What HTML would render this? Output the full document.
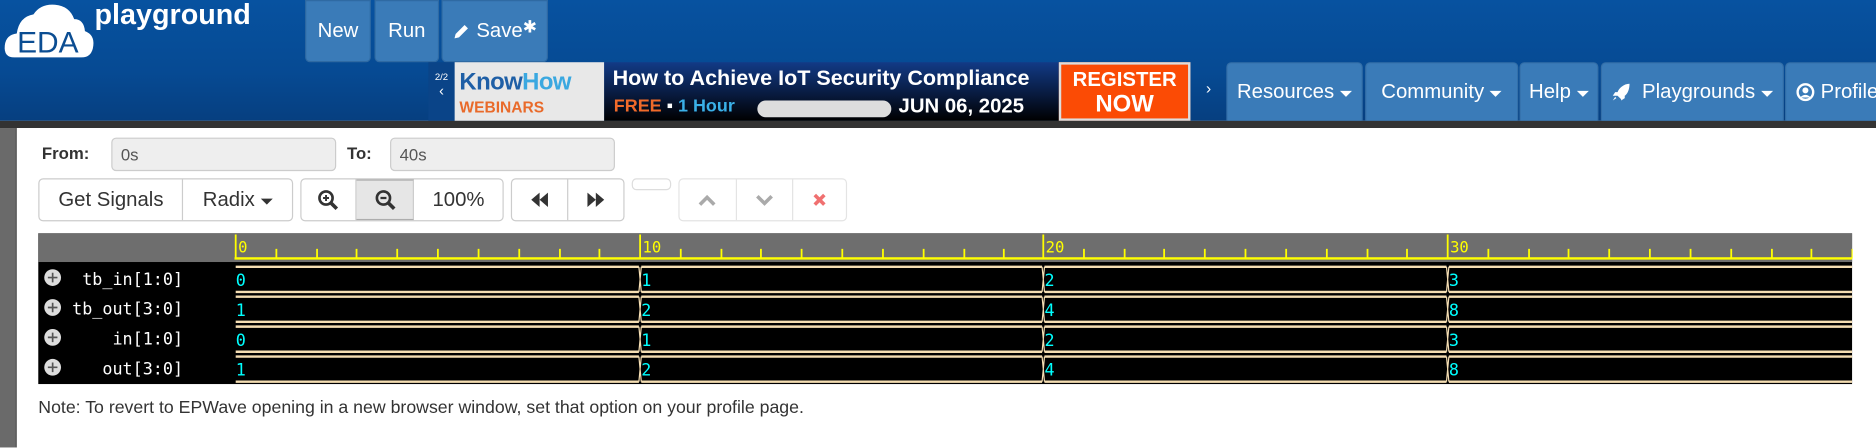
<!DOCTYPE html>
<html><head><meta charset="utf-8">
<style>
html,body{margin:0;padding:0;width:1876px;height:448px;overflow:hidden;background:#fff;font-family:"Liberation Sans",Arial,sans-serif}
#w{position:absolute;left:0;top:0;width:1568px;height:374px;transform:scale(1.19643);transform-origin:0 0}
.hdr{position:absolute;left:0;top:0;width:1568px;height:101px;background:linear-gradient(#0752a0,#064a93 60%,#063f80)}
.strip{position:absolute;left:0;top:101px;width:1568px;height:6px;background:#333}
.lside{position:absolute;left:0;top:107px;width:13px;height:267px;background:#6a6a6a}
.panel{position:absolute;left:13px;top:107px;width:1555px;height:267px;background:#fff;border-left:1px solid #444}
.tb{position:absolute;background:#3a7bb8;color:#fff;font-size:17px;display:flex;align-items:center;justify-content:center;border-radius:0 0 4px 4px;border:1px solid #2f6aa3;box-sizing:border-box}
.nav{position:absolute;top:52px;height:50px;background:#3a7bb8;color:#fff;font-size:17px;display:flex;align-items:center;justify-content:center;border-radius:4px 4px 0 0;box-sizing:border-box;border:1px solid #346fa8}
.car{border-left:5px solid transparent;border-right:5px solid transparent;border-top:5px solid #fff;margin-left:5px;margin-top:3px}
.lbl{position:absolute;font-size:14px;font-weight:bold;color:#333}
.inp{position:absolute;height:28px;background:#eee;border:1px solid #ccc;border-radius:4px;box-sizing:border-box;font-size:14px;color:#555;padding:5px 7px}
.grp{position:absolute;top:149px;height:36px;border:1px solid #ccc;border-radius:4px;box-sizing:border-box;display:flex;background:#fff}
.grp div{display:flex;align-items:center;justify-content:center;border-right:1px solid #ccc;font-size:17px;color:#333;box-sizing:border-box;height:100%}
.grp div:last-child{border-right:none}
</style></head><body><div id="w">
<div class="hdr"></div>
<svg style="position:absolute;left:0;top:0" width="82" height="52">
<path d="M12 48 Q3 48 4 38 Q5 29 14 28 Q16 14 28 12 Q34 3 46 4 Q58 5 62 16 Q70 16 71 26 Q79 29 78 38 Q77 48 68 48 Z" fill="#fff"/>
<text x="40" y="44" text-anchor="middle" font-family="Liberation Sans" font-size="25" fill="#0b4d92">EDA</text>
</svg>
<div style="position:absolute;left:79px;top:-1px;color:#fff;font-weight:bold;font-size:24px">playground</div>
<div class="tb" style="left:255px;top:0;width:55px;height:52px">New</div>
<div class="tb" style="left:313px;top:0;width:54px;height:52px">Run</div>
<div class="tb" style="left:369px;top:0;width:89px;height:52px"><svg width="15" height="15" viewBox="0 0 16 16"><path d="M2 14l1-4 8-8 3 3-8 8z" fill="#fff"/></svg>&nbsp;Save<sup style="font-size:14px;margin-top:-8px">&#10033;</sup></div>
<div style="position:absolute;left:358px;top:52px;width:22px;height:49px;background:#0a4488;color:#fff;font-size:8px;text-align:center;padding-top:8px;box-sizing:border-box">2/2<br><span style="font-size:12px">&#8249;</span></div>
<div style="position:absolute;left:380px;top:52px;width:125px;height:49px;background:#e8e8e8">
<div style="position:absolute;left:4px;top:6px;font-weight:bold;font-size:20px;color:#1f5fa6;letter-spacing:-0.5px">Know<span style="color:#3aa8e0">How</span></div>
<div style="position:absolute;left:4px;top:30px;font-weight:bold;font-size:13px;color:#e96a2a">WEBINARS</div></div>
<div style="position:absolute;left:505px;top:52px;width:380px;height:49px;background:linear-gradient(#123a86,#081a3e 55%,#000)">
<div style="position:absolute;left:7px;top:3px;color:#fff;font-weight:bold;font-size:18px;white-space:nowrap">How to Achieve IoT Security Compliance</div>
<div style="position:absolute;left:8px;top:28px;font-weight:bold;font-size:15px;color:#f06a2a;white-space:nowrap">FREE <span style="color:#fff">&#9642;</span> <span style="color:#3ab0e8">1 Hour</span></div>
<div style="position:absolute;left:128px;top:32px;width:112px;height:14px;background:#ddd;border-radius:7px"></div>
<div style="position:absolute;left:246px;top:27px;font-weight:bold;font-size:17px;color:#fff">JUN 06, 2025</div></div>
<div style="position:absolute;left:885px;top:52px;width:110px;height:49px;background:#fb4b05;border:2px solid #ddd;box-sizing:border-box;color:#fff;font-weight:bold;text-align:center;font-size:17px;line-height:20px;padding-top:3px">REGISTER<br><span style="font-size:20px">NOW</span></div>
<div style="position:absolute;left:1008px;top:66px;color:#fff;font-size:13px">&#8250;</div>
<div class="nav" style="left:1025px;width:114px">Resources<span class="car"></span></div>
<div class="nav" style="left:1141px;width:128px">Community<span class="car"></span></div>
<div class="nav" style="left:1270px;width:66px">Help<span class="car"></span></div>
<div class="nav" style="left:1338px;width:153px"><svg width="16" height="16" viewBox="0 0 16 16"><path d="M15 1C10 1 6 5 5 8L3 8 1 11 5 11 5 11 8 14 8 15 11 13 11 11C13 10 15 6 15 1Z M3 12L1 15 4 13Z" fill="#fff"/></svg>&nbsp;&nbsp;Playgrounds<span class="car"></span></div>
<div class="nav" style="left:1492px;width:90px;justify-content:flex-start;padding-left:8px"><svg width="16" height="16" viewBox="0 0 16 16"><circle cx="8" cy="8" r="6.5" fill="none" stroke="#fff" stroke-width="2"/><circle cx="8" cy="6.5" r="2.5" fill="#fff"/><path d="M3.5 12.5Q8 8 12.5 12.5" fill="#fff"/></svg>&nbsp;Profile</div>
<div class="strip"></div><div class="lside"></div><div class="panel"></div>
<div class="lbl" style="left:35px;top:120px">From:</div>
<div class="inp" style="left:93px;top:115px;width:188px">0s</div>
<div class="lbl" style="left:290px;top:120px">To:</div>
<div class="inp" style="left:326px;top:115px;width:188px">40s</div>
<div class="grp" style="left:32px;width:213px"><div style="width:121px">Get Signals</div><div style="width:91px">Radix<span class="car" style="border-top-color:#333"></span></div></div>
<div class="grp" style="left:251px;width:170px">
<div style="width:46px"><svg width="18" height="18" viewBox="0 0 18 18"><circle cx="7.5" cy="7.5" r="5.5" fill="none" stroke="#333" stroke-width="2.2"/><path d="M11.5 11.5l5 5" stroke="#333" stroke-width="3"/><path d="M5 7.5h5M7.5 5v5" stroke="#333" stroke-width="1.6"/></svg></div>
<div style="width:49px;background:#e6e6e6;border-top:1px solid #adadad;border-bottom:1px solid #adadad"><svg width="18" height="18" viewBox="0 0 18 18"><circle cx="7.5" cy="7.5" r="5.5" fill="none" stroke="#333" stroke-width="2.2"/><path d="M11.5 11.5l5 5" stroke="#333" stroke-width="3"/><path d="M5 7.5h5" stroke="#333" stroke-width="1.8"/></svg></div>
<div style="width:74px">100%</div></div>
<div class="grp" style="left:427px;width:95px">
<div style="width:47px"><svg width="16" height="16" viewBox="0 0 16 16"><path d="M8 2L1 8l7 6zM15 2L8 8l7 6z" fill="#333"/></svg></div>
<div style="width:47px"><svg width="16" height="16" viewBox="0 0 16 16"><path d="M1 2l7 6-7 6zM8 2l7 6-7 6z" fill="#333"/></svg></div></div>
<div class="grp" style="left:528px;top:149px;width:33px;height:10px;border-color:#ddd"></div>
<div class="grp" style="left:567px;width:141px;border-color:#e4e4e4">
<div style="width:48px;border-color:#e4e4e4"><svg width="16" height="12" viewBox="0 0 16 12"><path d="M2 10l6-6 6 6" fill="none" stroke="#aaa" stroke-width="3"/></svg></div>
<div style="width:48px;border-color:#e4e4e4"><svg width="16" height="12" viewBox="0 0 16 12"><path d="M2 3l6 6 6-6" fill="none" stroke="#aaa" stroke-width="3"/></svg></div>
<div style="width:44px"><svg width="12" height="12" viewBox="0 0 12 12"><path d="M2 2l8 8M10 2l-8 8" stroke="#f07070" stroke-width="3"/></svg></div></div>
<svg style="position:absolute;left:0;top:0" width="1568" height="374">
<rect x="32" y="195" width="1516" height="126" fill="#000"/>
<rect x="32" y="195" width="1516" height="24" fill="#6e6e6e"/>
<rect x="196" y="215" width="1352" height="2" fill="#ff0"/>
<g stroke="#ff0" stroke-width="1.5">
<line x1="197" y1="196" x2="197" y2="216"/><line x1="535" y1="196" x2="535" y2="216"/><line x1="872" y1="196" x2="872" y2="216"/><line x1="1210" y1="196" x2="1210" y2="216"/>
</g>
<g stroke="#ff0" stroke-width="1.5" id="tk">
<line x1="231" y1="208" x2="231" y2="216"/><line x1="265" y1="208" x2="265" y2="216"/><line x1="298" y1="208" x2="298" y2="216"/><line x1="332" y1="208" x2="332" y2="216"/><line x1="366" y1="208" x2="366" y2="216"/><line x1="400" y1="208" x2="400" y2="216"/><line x1="434" y1="208" x2="434" y2="216"/><line x1="468" y1="208" x2="468" y2="216"/><line x1="501" y1="208" x2="501" y2="216"/>
</g>
<use href="#tk" x="338"/><use href="#tk" x="675"/><use href="#tk" x="1013"/>
<line x1="1548" y1="208" x2="1548" y2="216" stroke="#ff0"/>
<g font-family="DejaVu Sans Mono" font-size="13" fill="#ff0"><text x="199" y="211">0</text><text x="537" y="211">10</text><text x="874" y="211">20</text><text x="1212" y="211">30</text></g>
<g stroke="#f5deb3" stroke-width="2" fill="none">
<path d="M197 223H534M536 223H871M873 223H1209M1211 223H1548M197 244H534M536 244H871M873 244H1209M1211 244H1548"/>
<path d="M197 248H534M536 248H871M873 248H1209M1211 248H1548M197 269H534M536 269H871M873 269H1209M1211 269H1548"/>
<path d="M197 273H534M536 273H871M873 273H1209M1211 273H1548M197 294H534M536 294H871M873 294H1209M1211 294H1548"/>
<path d="M197 298H534M536 298H871M873 298H1209M1211 298H1548M197 319H534M536 319H871M873 319H1209M1211 319H1548"/>
</g>
<g stroke="#f5deb3" stroke-width="1">
<path d="M534 223L536 244M536 223L534 244M871 223L873 244M873 223L871 244M1209 223L1211 244M1211 223L1209 244"/>
<path d="M534 248L536 269M536 248L534 269M871 248L873 269M873 248L871 269M1209 248L1211 269M1211 248L1209 269"/>
<path d="M534 273L536 294M536 273L534 294M871 273L873 294M873 273L871 294M1209 273L1211 294M1211 273L1209 294"/>
<path d="M534 298L536 319M536 298L534 319M871 298L873 319M873 298L871 319M1209 298L1211 319M1211 298L1209 319"/>
</g>
<g font-family="DejaVu Sans Mono" font-size="14" fill="#0ff">
<text x="197" y="239">0</text><text x="536" y="239">1</text><text x="873" y="239">2</text><text x="1211" y="239">3</text>
<text x="197" y="264">1</text><text x="536" y="264">2</text><text x="873" y="264">4</text><text x="1211" y="264">8</text>
<text x="197" y="289">0</text><text x="536" y="289">1</text><text x="873" y="289">2</text><text x="1211" y="289">3</text>
<text x="197" y="314">1</text><text x="536" y="314">2</text><text x="873" y="314">4</text><text x="1211" y="314">8</text>
</g>
<g fill="#ddd"><circle cx="44" cy="232" r="7"/><circle cx="44" cy="257" r="7"/><circle cx="44" cy="282" r="7"/><circle cx="44" cy="307" r="7"/></g>
<g stroke="#555" stroke-width="1.4"><path d="M40 232h8M44 228v8M40 257h8M44 253v8M40 282h8M44 278v8M40 307h8M44 303v8"/></g>
<g font-family="DejaVu Sans Mono" font-size="14" fill="#fff" text-anchor="end">
<text x="153" y="238">tb_in[1:0]</text><text x="153" y="263">tb_out[3:0]</text><text x="153" y="288">in[1:0]</text><text x="153" y="313">out[3:0]</text>
</g>
</svg>
<div style="position:absolute;left:32px;top:333px;font-size:14.8px;color:#333">Note: To revert to EPWave opening in a new browser window, set that option on your profile page.</div>
</div></body></html>
